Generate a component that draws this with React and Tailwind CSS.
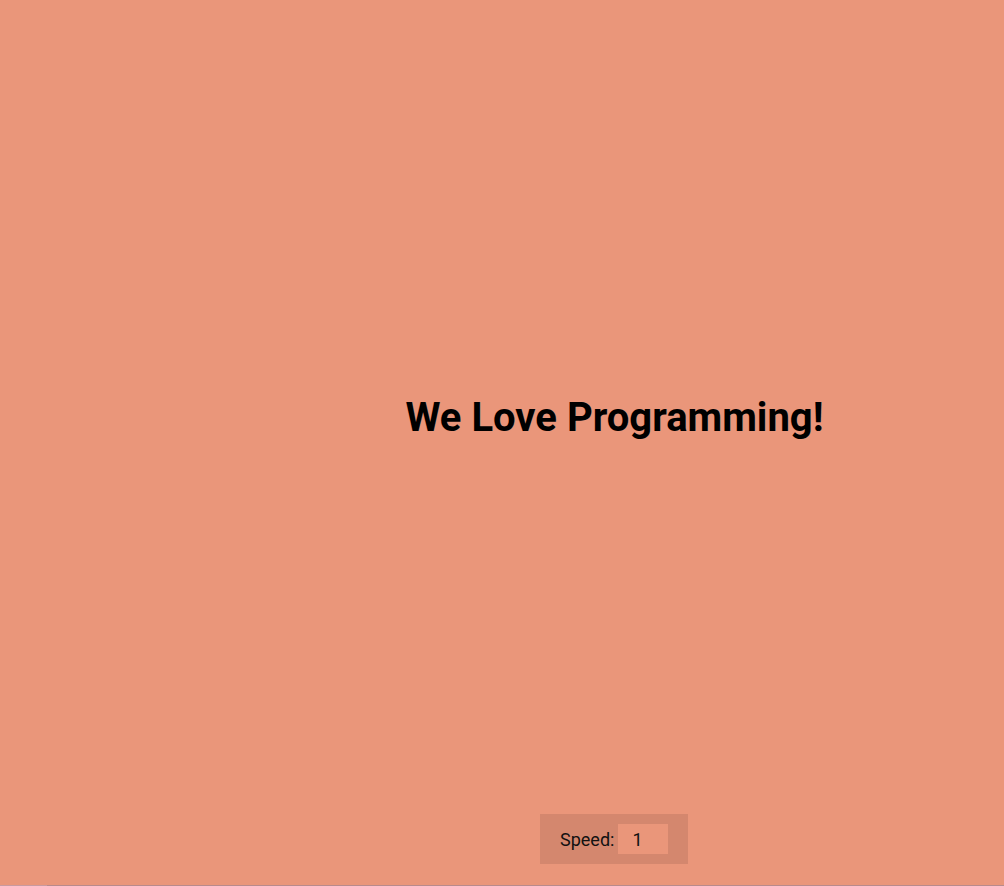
import React from "react";

export default function App() {
  return (
    <div className="w-full h-[886px] bg-[#EA967A] flex flex-col overflow-hidden" style={{ fontFamily: "Roboto, 'Noto Sans', sans-serif" }}>
      <div className="flex-1 flex items-center justify-center pl-[225px] pt-[22px]">
        <h1 className="text-[40px] font-bold leading-[48px] text-black">We Love Programming!</h1>
      </div>
      <div className="flex justify-center pl-[224px] mb-[21px]">
        <div className="w-[148px] h-[50px] bg-[#D4876E] flex items-center pl-[20px] gap-[4px]">
          <span className="text-[18px] text-[#111]">Speed:</span>
          <div className="w-[50px] h-[30px] bg-[#EA967A] flex items-center pl-[14px] text-[18px] text-[#111]">1</div>
        </div>
      </div>
      <div className="h-px w-full flex">
        <div className="w-[47px] bg-[#c89aa0]"></div>
        <div className="flex-1 bg-[#b88a8c]"></div>
      </div>
    </div>
  );
}
